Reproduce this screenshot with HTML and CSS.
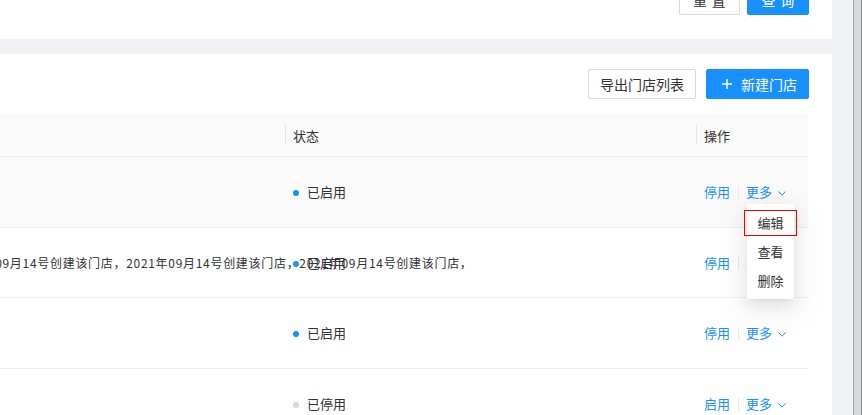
FILE: index.html
```html
<!DOCTYPE html>
<html lang="zh-CN">
<head>
  <meta charset="UTF-8" />
  <title>门店管理</title>
  <link rel="stylesheet" href="styles.css">
</head>
<body>

  <div class="page">
    <div class="main">

      <div class="card search-card">
        <button class="btn btn-pair">重置</button>
        <button class="btn btn-pair btn-primary">查询</button>
      </div>

      <div class="card list-card">
        <div class="toolbar">
          <button class="btn btn-wide">导出门店列表</button>
          <button class="btn btn-primary btn-add">
            <svg width="10" height="10" viewBox="0 0 10 10"><path d="M5 0v10M0 5h10" stroke="#fff" stroke-width="1.4" fill="none"/></svg>
            <span>新建门店</span>
          </button>
        </div>

        <table class="store-table">
          <colgroup>
            <col style="width:285px">
            <col style="width:411px">
            <col style="width:112px">
          </colgroup>
          <thead>
            <tr>
              <th></th>
              <th class="sep">状态</th>
              <th class="sep">操作</th>
            </tr>
          </thead>
          <tbody>
            <tr class="hover">
              <td></td>
              <td><span class="dot on"></span>已启用</td>
              <td class="ops">
                <a>停用</a><i class="bar"></i><a>更多</a>
                <svg class="caret" width="8" height="5" viewBox="0 0 8 5"><path d="M0.5 0.5L4 4.2L7.5 0.5" stroke="#1890ff" stroke-width="1" fill="none"/></svg>
                <div class="dropdown">
                  <div class="menu-item active">编辑</div>
                  <div class="menu-item">查看</div>
                  <div class="menu-item">删除</div>
                </div>
              </td>
            </tr>
            <tr>
              <td><span class="desc">2021年09月14号创建该门店，2021年09月14号创建该门店，2021年09月14号创建该门店，</span></td>
              <td><span class="dot on"></span>已启用</td>
              <td class="ops">
                <a>停用</a><i class="bar"></i><a>更多</a>
                <svg class="caret" width="8" height="5" viewBox="0 0 8 5"><path d="M0.5 0.5L4 4.2L7.5 0.5" stroke="#1890ff" stroke-width="1" fill="none"/></svg>
              </td>
            </tr>
            <tr>
              <td></td>
              <td><span class="dot on"></span>已启用</td>
              <td class="ops">
                <a>停用</a><i class="bar"></i><a>更多</a>
                <svg class="caret" width="8" height="5" viewBox="0 0 8 5"><path d="M0.5 0.5L4 4.2L7.5 0.5" stroke="#1890ff" stroke-width="1" fill="none"/></svg>
              </td>
            </tr>
            <tr>
              <td></td>
              <td><span class="dot off"></span>已停用</td>
              <td class="ops">
                <a>启用</a><i class="bar"></i><a>更多</a>
                <svg class="caret" width="8" height="5" viewBox="0 0 8 5"><path d="M0.5 0.5L4 4.2L7.5 0.5" stroke="#1890ff" stroke-width="1" fill="none"/></svg>
              </td>
            </tr>
          </tbody>
        </table>
      </div>

    </div>
    <div class="scrollbar"></div>
  </div>

</body>
</html>
```

FILE: styles.css
```css
html, body { height: 100%; }
body {
  margin: 0;
  overflow: hidden;
  background: #f0f1f5;
  font-family: "Noto Sans CJK SC", "Noto Sans", sans-serif;
  color: #333;
}

.page { display: flex; height: 100%; }
.main { flex: 1; padding-right: 21px; }

.scrollbar {
  width: 7px;
  background: #d6d8dc;
  border-left: 1px solid #a3a4a8;
  border-right: 1px solid #8c8d90;
}

.card { background: #fff; }

.search-card {
  height: 39px;
  box-sizing: border-box;
  padding: 0 23px 24px 0;
  display: flex;
  justify-content: flex-end;
  align-items: flex-end;
  gap: 7px;
}

.list-card {
  margin-top: 15px;
  padding: 15px 23px 0 0;
  height: 400px;
}

/* buttons */
.btn {
  height: 30px;
  padding: 0 13px;
  font-family: inherit;
  font-size: 14px;
  color: #333;
  background: #fff;
  border: 1px solid #d9d9d9;
  border-radius: 2px;
  flex-shrink: 0;
  cursor: pointer;
}
.btn-primary { background: #1890ff; border-color: #1890ff; color: #fff; }

/* two-character labels get spaced out */
.btn-pair { letter-spacing: .34em; padding: 0 9px 0 13px; }
.btn-wide { padding: 0 11px; }

.btn-add {
  display: flex;
  align-items: center;
  gap: 9px;
  padding: 0 11px 0 15px;
}

.toolbar {
  display: flex;
  justify-content: flex-end;
  gap: 10px;
  margin-bottom: 15px;
}

/* table */
.store-table {
  width: 808px;
  table-layout: fixed;
  border-collapse: collapse;
  font-size: 13px;
}

.store-table th {
  position: relative;
  height: 42px;
  padding: 0 8px;
  background: #fafafa;
  border-bottom: 1px solid #eeeeee;
  text-align: left;
  font-weight: normal;
  color: #333;
}
.store-table th.sep::before {
  content: "";
  position: absolute;
  left: 0;
  top: 10px;
  height: 21px;
  width: 1px;
  background: #e6e6e6;
}

.store-table td {
  height: 69.5px;
  padding: 0 8px;
  border-bottom: 1px solid #efefef;
  white-space: nowrap;
  vertical-align: middle;
}
.store-table tr.hover td { background: #fafafa; }

.desc {
  display: inline-block;
  margin-left: -55px;
  font-size: 12px;
  letter-spacing: .7px;
  color: #333;
}

.dot {
  display: inline-block;
  width: 6px;
  height: 6px;
  border-radius: 50%;
  margin-right: 8px;
  vertical-align: 1px;
}
.dot.on { background: #1890ff; }
.dot.off { background: #d9d9d9; }

/* row actions */
.ops { position: relative; color: #1890ff; padding-left: 7px; }
.ops a { color: #1890ff; cursor: pointer; }
.ops .bar {
  display: inline-block;
  width: 1px;
  height: 13px;
  margin: 0 7px 0 8px;
  background: #e8e8e8;
  vertical-align: -2px;
}
.ops .caret { margin-left: 3px; vertical-align: 1px; }

.dropdown {
  position: absolute;
  left: 51px;
  top: 47px;
  width: 47px;
  padding: 4px 0;
  background: #fff;
  border-radius: 2px;
  box-shadow: 0 3px 6px -4px rgba(0,0,0,.12), 0 6px 16px 0 rgba(0,0,0,.08), 0 9px 28px 8px rgba(0,0,0,.05);
  z-index: 10;
}

.menu-item {
  position: relative;
  height: 29px;
  line-height: 29px;
  text-align: center;
  color: #333;
  font-size: 13px;
}
.menu-item.active::after {
  content: "";
  position: absolute;
  top: 2px; bottom: 1px;
  left: -3px; right: -3px;
  border: 1px solid #e00;
}
```
